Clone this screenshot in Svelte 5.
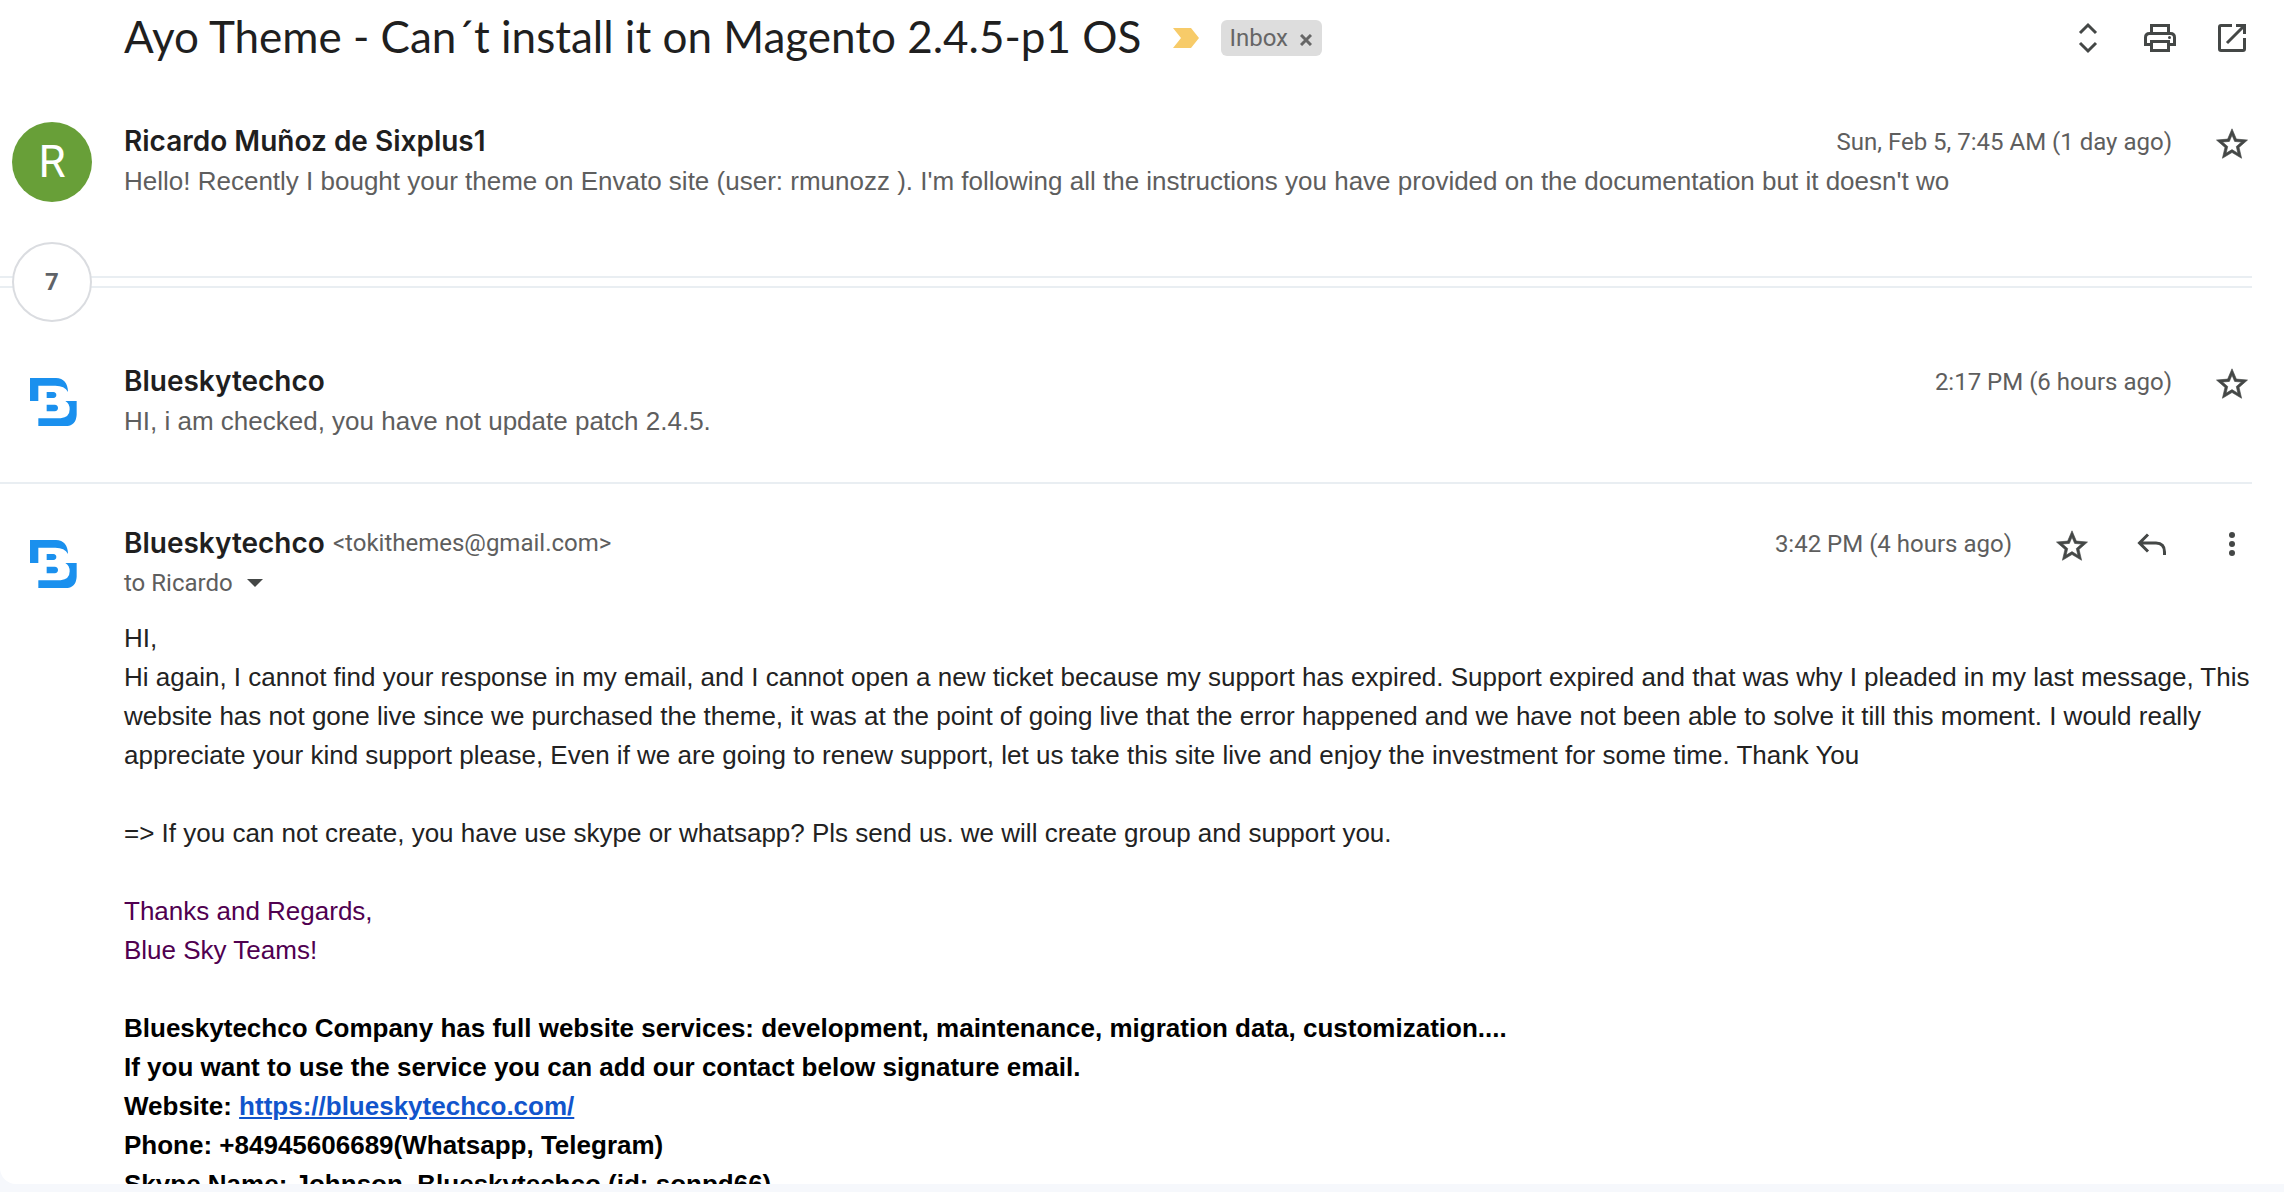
<script>
  const expanded = {
    name: 'Blueskytechco',
    email: '<tokithemes@gmail.com>',
    time: '3:42 PM (4 hours ago)',
  };
  const first = {
    name: 'Ricardo Muñoz de Sixplus1',
    snippet:
      "Hello! Recently I bought your theme on Envato site (user: rmunozz ). I'm following all the instructions you have provided on the documentation but it doesn't wo",
    time: 'Sun, Feb 5, 7:45 AM (1 day ago)',
  };
  const second = {
    name: 'Blueskytechco',
    snippet: 'HI, i am checked, you have not update patch 2.4.5.',
    time: '2:17 PM (6 hours ago)',
  };
</script>

{#snippet logo()}
  <svg class="avatar" viewBox="0 0 240 240" role="img" aria-label="Blueskytechco">
    <path d="M54 48H132Q167 50 168 90Q158 71 130 71H79V117H54Z" />
    <path d="M160 117H194V158Q192 192 160 192H79V169H146Q173 166 173 142Q173 124 160 117Z" />
    <path d="M104 90H124Q133 91 133 99T124 108H104ZM104 128H128Q138 129 138 138T128 148H104Z" />
  </svg>
{/snippet}

{#snippet star()}
  <button class="icon star" aria-label="Star">
    <svg viewBox="-0.9 -2.4 25.8 25.8">
      <path d="M22 9.24l-7.19-.62L12 2 9.19 8.63 2 9.24l5.46 4.73L5.82 21 12 17.27 18.18 21l-1.63-7.03L22 9.24zM12 15.4l-3.76 2.27 1-4.28-3.32-2.88 4.38-.38L12 6.1l1.71 4.04 4.38.38-3.32 2.88 1 4.28L12 15.4z" />
    </svg>
  </button>
{/snippet}

{#snippet collapsed(m, picture)}
  <article class="message">
    {@render picture()}
    <div class="main">
      <div class="line">
        <h2>{m.name}</h2>
        <div class="meta">
          <time>{m.time}</time>
          {@render star()}
        </div>
      </div>
      <p class="snippet">{m.snippet}</p>
    </div>
  </article>
{/snippet}

{#snippet initial()}
  <div class="avatar initial">R</div>
{/snippet}

<main class="thread">
  <header class="subject">
    <h1>Ayo Theme - Can´t install it on Magento 2.4.5-p1 OS</h1>
    <button class="marker" aria-label="Important">
      <svg viewBox="0 0 26 20"><path d="M0 0H18L26 10L18 20H0L8 10Z" /></svg>
    </button>
    <span class="chip">
      Inbox
      <button aria-label="Remove label Inbox">
        <svg viewBox="0 0 12 12"><path d="M1 1L11 11M11 1L1 11" /></svg>
      </button>
    </span>
    <nav class="tools">
      <button class="icon" aria-label="Expand all">
        <svg class="stroked" viewBox="0 0 40 40"><path d="M12 15L20 7L28 15M12 25L20 33L28 25" /></svg>
      </button>
      <button class="icon" aria-label="Print all">
        <svg class="stroked" viewBox="0 0 40 40">
          <path d="M11.5 16V7.5H28.5V16M11.5 26.5H5.5V19.5Q5.5 15.5 9.5 15.5H30.5Q34.5 15.5 34.5 19.5V26.5H28.5M11.5 23.5H28.5V32.5H11.5Z" />
          <circle class="dot" cx="29.5" cy="19.5" r="1.5" />
        </svg>
      </button>
      <button class="icon" aria-label="In new window">
        <svg class="stroked" viewBox="0 0 40 40">
          <path d="M20 7.5H9Q7.5 7.5 7.5 9V31Q7.5 32.5 9 32.5H31Q32.5 32.5 32.5 31V20M24 7.5H32.5V16M32 8L15 25" />
        </svg>
      </button>
    </nav>
  </header>

  {@render collapsed(first, initial)}

  <div class="more">
    <button aria-label="7 more messages">7</button>
  </div>

  {@render collapsed(second, logo)}

  <article class="message divided">
    {@render logo()}
    <div class="main">
      <div class="line">
        <h2>{expanded.name}</h2>
        <span class="email">{expanded.email}</span>
        <div class="meta">
          <time>{expanded.time}</time>
          {@render star()}
          <button class="icon" aria-label="Reply">
            <svg class="stroked" viewBox="0 0 40 40"><path d="M16 10.5L7.5 19L16 27.5M7.5 19H24Q32.5 19 32.5 28V31" /></svg>
          </button>
          <button class="icon" aria-label="More">
            <svg viewBox="0 0 40 40"><circle cx="20" cy="11" r="3" /><circle cx="20" cy="20" r="3" /><circle cx="20" cy="29" r="3" /></svg>
          </button>
        </div>
      </div>
      <button class="recipient">
        to Ricardo
        <svg viewBox="0 0 16 8"><path d="M0 0H16L8 8Z" /></svg>
      </button>

      <div class="body">
        <p>HI,</p>
        <p>
          Hi again, I cannot find your response in my email, and I cannot open a new ticket because my support has
          expired. Support expired and that was why I pleaded in my last message, This website has not gone live since
          we purchased the theme, it was at the point of going live that the error happened and we have not been able
          to solve it till this moment. I would really appreciate your kind support please, Even if we are going to
          renew support, let us take this site live and enjoy the investment for some time. Thank You
        </p>
        <br />
        <p>=&gt; If you can not create, you have use skype or whatsapp? Pls send us. we will create group and support you.</p>
        <br />
        <p class="regards">Thanks and Regards,<br />Blue Sky Teams!</p>
        <br />
        <p class="signature">
          Blueskytechco Company has full website services: development, maintenance, migration data, customization....<br />
          If you want to use the service you can add our contact below signature email.<br />
          Website: <a href="https://blueskytechco.com/">https://blueskytechco.com/</a><br />
          Phone: +84945606689(Whatsapp, Telegram)<br />
          Skype Name: Johnson. Blueskytechco (id: sonpd66)
        </p>
      </div>
    </div>
  </article>
</main>

<style>
  :global(body) {
    background: #f6f8fc;
  }
  :global(#app) {
    display: flex;
    flex-direction: column;
    box-sizing: border-box;
    height: 100vh;
    padding-bottom: 8px;
  }
  .thread {
    flex: 1;
    min-height: 0;
    overflow: hidden;
    box-sizing: border-box;
    padding-right: 32px;
    border-bottom-left-radius: 16px;
    background: #fff;
    color: #5e5e5e;
    font: 24px/40px Roboto, "Liberation Sans", sans-serif;
  }
  h1,
  h2,
  p {
    margin: 0;
  }
  button {
    padding: 0;
    border: 0;
    background: none;
    color: inherit;
    font: inherit;
    cursor: pointer;
  }
  svg {
    display: block;
  }
  .icon,
  .icon svg {
    width: 40px;
    height: 40px;
    flex: none;
    fill: #444746;
  }
  .icon .stroked {
    fill: none;
    stroke: #444746;
    stroke-width: 3;
  }
  .icon .dot {
    fill: #444746;
    stroke: none;
  }
  .star path {
    stroke: #444746;
    stroke-width: 0.4;
  }

  .subject {
    display: flex;
    align-items: center;
    height: 76px;
    margin-bottom: 6px;
    padding-left: 124px;
  }
  h1 {
    padding-bottom: 4px;
    color: #1f1f1f;
    font: 400 44px/56px Lato, sans-serif;
  }
  .marker {
    margin-left: 32px;
  }
  .marker svg {
    width: 26px;
    height: 20px;
    fill: #f7cb69;
  }
  .chip {
    display: flex;
    align-items: center;
    gap: 12px;
    height: 36px;
    margin-left: 22px;
    padding: 0 10px 0 8px;
    border-radius: 6px;
    background: #ddd;
    color: #666;
    line-height: 36px;
  }
  .chip button {
    padding-top: 4px;
  }
  .chip svg {
    width: 12px;
    height: 12px;
    fill: none;
    stroke: #666;
    stroke-width: 3;
  }
  .tools {
    display: flex;
    gap: 32px;
    margin-left: auto;
  }

  .message {
    display: flex;
    gap: 32px;
    padding: 39px 0 40px 12px;
  }
  .divided {
    border-top: 2px solid #e9eef2;
  }
  .avatar {
    flex: none;
    width: 80px;
    height: 80px;
    margin-top: 1px;
    fill: #1a90ee;
  }
  .initial {
    border-radius: 50%;
    background: #689f38;
    color: #fff;
    font-size: 44px;
    line-height: 80px;
    text-align: center;
  }
  .message .main {
    flex: 1;
    min-width: 0;
  }
  .line {
    display: flex;
    height: 40px;
  }
  h2 {
    color: #1f1f1f;
    font: 600 28px/40px Inter, sans-serif;
  }
  .email {
    margin-left: 8px;
  }
  .meta {
    display: flex;
    gap: 40px;
    margin: 1px 0 0 auto;
  }
  .snippet {
    overflow: hidden;
    font: 26px/40px "Liberation Sans", Arial, sans-serif;
    white-space: nowrap;
  }

  .more {
    display: flex;
    align-items: center;
    height: 80px;
    padding-left: 12px;
    background: linear-gradient(#e9eef2 2px, #fff 2px 10px, #e9eef2 10px) center / 100% 12px no-repeat;
  }
  .more button {
    width: 80px;
    height: 80px;
    border: 2px solid #dadce0;
    border-radius: 50%;
    background: #fff;
    color: #5f6368;
    font-weight: 700;
  }

  .recipient {
    display: flex;
    align-items: center;
    gap: 14px;
    height: 40px;
  }
  .recipient svg {
    width: 16px;
    height: 8px;
    fill: #444746;
  }
  .body {
    margin-top: 16px;
    color: #222;
    font: 26px/39px "Liberation Sans", Arial, sans-serif;
  }
  .regards {
    color: #500050;
  }
  .signature {
    color: #000;
    font-weight: 700;
  }
  .signature a {
    color: #1155cc;
  }
</style>
